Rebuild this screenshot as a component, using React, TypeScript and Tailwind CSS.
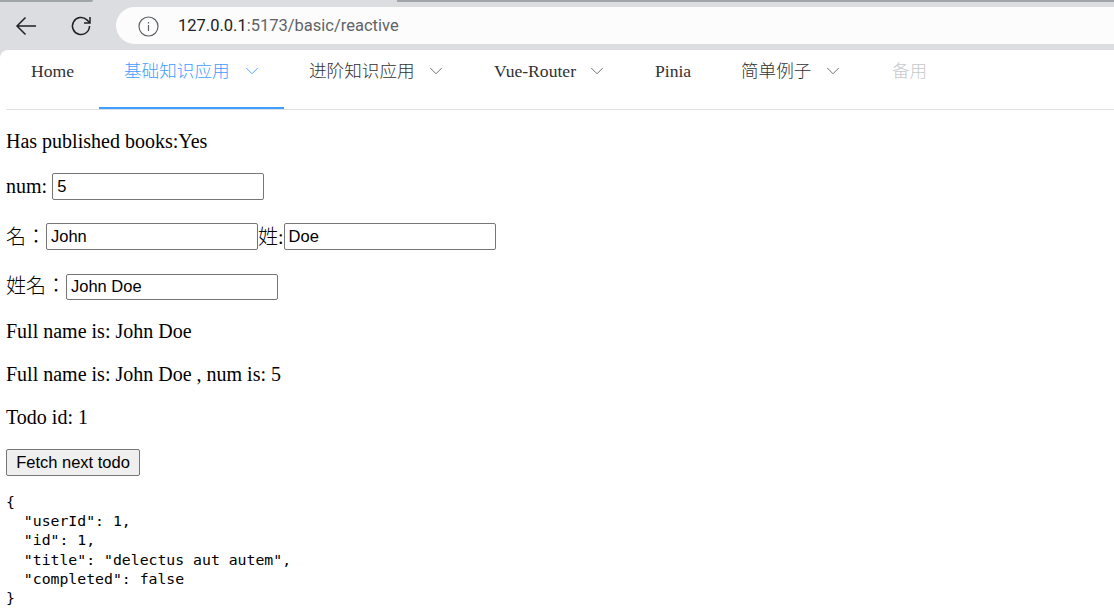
import { ChevronDown } from "lucide-react"

const fieldClass = "w-[212px] rounded-[2px] border border-[#767676] px-[4px] font-['Liberation_Sans',sans-serif] text-[16.5px] font-normal text-black"

function NavItem({ label, width, active, disabled, arrow }: { label: string; width: string; active?: boolean; disabled?: boolean; arrow?: string }) {
    const color = active ? "text-[#409eff]" : disabled ? "text-[#c8c9cc]" : "text-[#303133]"
    return (
        <div className={`flex h-[59px] items-start pl-[25px] leading-[42px] ${width} ${color} ${active ? "border-b-2 border-[#409eff]" : ""}`}>
            <span>{label}</span>
            {arrow && <ChevronDown className={`mt-[10px] h-[22px] w-[22px] shrink-0 ${active ? "" : "text-[#606266]"} ${arrow}`} strokeWidth={1} />}
        </div>
    )
}

export default function App() {
    return (
        <div className="h-[609px] w-[1114px] overflow-hidden bg-[#dcdde1] font-['Liberation_Serif','Noto_Sans_CJK_TC',serif] text-[20px] font-light text-black">
            {/* Browser toolbar */}
            <div className="relative flex h-[50px] items-start">
                <div className="absolute left-0 top-0 h-[2px] w-[93px] rounded-br-[2px] bg-[#a0a5aa]" />
                <div className="absolute left-[397px] right-0 top-0 h-[2px] bg-[#a0a5aa]" />
                <svg className="ml-[15px] mt-[15px] h-[22px] w-[22px]" viewBox="0 0 22 22" fill="none" stroke="#202124" strokeWidth="1.5">
                    <path d="M21 11H2M10.5 2.5 2 11l8.5 8.5" />
                </svg>
                <svg className="ml-[33px] mt-[15px] h-[22px] w-[22px]" viewBox="0 0 22 22" fill="none" stroke="#202124" strokeWidth="1.5">
                    <path d="M19.5 11a8.5 8.5 0 1 1-2.6-6.1L20 8M20 2v6h-6" />
                </svg>
                <div className="ml-[24px] mt-[7px] flex h-[37px] flex-1 items-center rounded-l-[19px] bg-[#fcfcfc] pl-[22px] pt-[1px] font-['Roboto',sans-serif] text-[16.5px] font-normal">
                    <svg className="h-[21px] w-[21px]" viewBox="0 0 21 21" fill="none" stroke="#5f6368" strokeWidth="1.2">
                        <circle cx="10.5" cy="10.5" r="9.5" />
                        <path d="M10.5 9v6M10.5 6v1.5" />
                    </svg>
                    <span className="ml-[19px] text-[#202124]">127.0.0.1</span>
                    <span className="text-[#5f6368]">:5173/basic/reactive</span>
                </div>
            </div>

            {/* Page */}
            <div className="h-[559px] rounded-tl-[8px] bg-white pl-[6px]">
                <nav className="flex h-[60px] border-b border-[#dcdfe6] font-['Liberation_Serif','Noto_Sans_CJK_SC',serif] text-[17.6px]">
                    <NavItem label="Home" width="w-[93px]" />
                    <NavItem label="基础知识应用" width="w-[185px]" active arrow="ml-[11px]" />
                    <NavItem label="进阶知识应用" width="w-[185px]" arrow="ml-[10px]" />
                    <NavItem label="Vue-Router" width="w-[161px]" arrow="ml-[10px]" />
                    <NavItem label="Pinia" width="w-[86px]" />
                    <NavItem label="简单例子" width="w-[151px]" arrow="ml-[11px]" />
                    <NavItem label="备用" width="w-[85px]" disabled />
                </nav>

                <div className="flex h-[62px] items-center">Has published books:Yes</div>
                <div className="flex h-[29px] items-center whitespace-pre">
                    <span className="mb-[2px]">num: </span>
                    <input readOnly value="5" className={`h-[27px] ${fieldClass}`} />
                </div>
                <div className="mt-[22px] flex h-[27px] items-center">
                    名：<input readOnly value="John" className={`h-[27px] ${fieldClass}`} />
                    姓:<input readOnly value="Doe" className={`h-[27px] ${fieldClass}`} />
                </div>
                <div className="mt-[24px] flex h-[26px] items-center">
                    <span className="mb-[2px]">姓名：</span>
                    <input readOnly value="John Doe" className={`h-[26px] pb-[2px] ${fieldClass}`} />
                </div>
                <div className="mt-[9px] flex h-[43px] items-center">Full name is: John Doe</div>
                <div className="flex h-[43px] items-center">Full name is: John Doe , num is: 5</div>
                <div className="flex h-[44px] items-center">Todo id: 1</div>
                <div className="flex h-[47px] items-center">
                    <button className="h-[27px] w-[134px] rounded-[2px] border border-[#767676] bg-[#efefef] pb-[2px] font-['Liberation_Sans',sans-serif] text-[16.5px] font-normal">Fetch next todo</button>
                </div>
                <pre className="mt-[6px] font-['DejaVu_Sans_Mono',monospace] text-[14.8px] font-normal leading-[19.2px]">{`{
  "userId": 1,
  "id": 1,
  "title": "delectus aut autem",
  "completed": false
}`}</pre>
            </div>
        </div>
    )
}
